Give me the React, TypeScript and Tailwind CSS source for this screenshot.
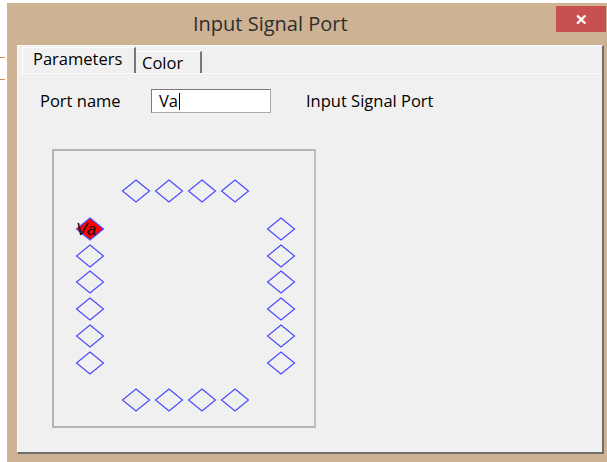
const ports = {
  top: [84, 117, 150, 183].map((x) => ({ x, y: 42 })),
  bottom: [84, 117, 150, 183].map((x) => ({ x, y: 251 })),
  left: [107, 133, 160, 187, 214].map((y) => ({ x: 38, y })),
  right: [80, 107, 133, 160, 187, 214].map((y) => ({ x: 229, y })),
}

function Diamond({ x, y, fill = 'none' }: { x: number; y: number; fill?: string }) {
  return (
    <polygon
      points={`${x},${y - 11} ${x + 13.5},${y} ${x},${y + 11} ${x - 13.5},${y}`}
      fill={fill}
      stroke="#4a4aff"
      strokeWidth={1.2}
    />
  )
}

export default function App() {
  const all = [...ports.top, ...ports.bottom, ...ports.left, ...ports.right]

  return (
    <div
      className="relative w-[607px] h-[462px] bg-white overflow-hidden"
      style={{ fontFamily: '"Open Sans", "Noto Sans", sans-serif' }}
    >
      {/* orange ticks at the left edge */}
      <div className="absolute left-0 top-[57px] w-[5px] h-px bg-[#e08a3c]" />
      <div className="absolute left-0 top-[79px] w-[5px] h-px bg-[#e08a3c]" />

      <div className="ml-[7px] mt-[3px] w-[600px] h-[459px] bg-[#cdb293] flex flex-col">
        {/* title bar */}
        <div className="h-[42px] flex items-start">
          <div className="ml-[186px] mt-[7px] text-[20px] leading-[28px] text-[#2e2e2e]">Input Signal Port</div>
          <div className="ml-auto mt-[3px] mr-[1px] w-[50px] h-[26px] bg-[#c75050] flex items-center justify-center text-white text-[15px] font-bold leading-none">
            ✕
          </div>
        </div>

        {/* dialog body */}
        <div className="ml-[10px] mr-[3px] mb-[8px] flex-1 bg-[#f0f0f0] border-l border-t border-l-[#fafafa] border-t-[#fafafa] border-r-2 border-b-2 border-r-[#6e6e6e] border-b-[#6e6e6e] flex flex-col">
          {/* tabs */}
          <div className="h-[27px] flex items-end pl-[4px] text-[16.5px] text-black">
            <div className="h-[26px] w-[114px] border-l border-t border-[#fff] border-r-2 border-r-[#777] flex items-center pl-[10px] pb-[2px]">
              Parameters
            </div>
            <div className="h-[22px] w-[66px] border-t border-[#fff] border-r-2 border-r-[#777] flex items-center pl-[6px] pt-[2px]">
              Color
            </div>
          </div>

          <div className="flex-1 border-t border-[#fafafa] ml-[3px] relative">
            {/* port name row */}
            <div className="flex items-center mt-[15px] text-[16.5px] text-black">
              <div className="ml-[19px] w-[111px]">Port name</div>
              <div className="w-[120px] h-[24px] bg-white border border-[#a9a9a9] border-t-[#7a7a7a] border-l-[#7a7a7a] flex items-center pl-[7px] text-[16.5px]">
                Va<span className="inline-block w-px h-[17px] bg-black ml-px" />
              </div>
              <div className="ml-[35px]">Input Signal Port</div>
            </div>

            {/* symbol preview */}
            <div className="ml-[31px] mt-[35px] w-[264px] h-[279px] border-2 border-[#b4b4b4] border-r-[#c0c0c0] bg-[#f0f0f0]">
              <svg width="260" height="275" viewBox="2 2 260 275">
                {all.map((p, i) => (
                  <Diamond key={i} x={p.x} y={p.y} />
                ))}
                <Diamond x={38} y={80} fill="#ff0000" />
                <text
                  x={24}
                  y={86}
                  fontSize={17}
                  fontStyle="italic"
                  fill="#111"
                  fontFamily='"Liberation Sans", sans-serif'
                >
                  Va
                </text>
              </svg>
            </div>
          </div>
        </div>
      </div>
    </div>
  )
}
